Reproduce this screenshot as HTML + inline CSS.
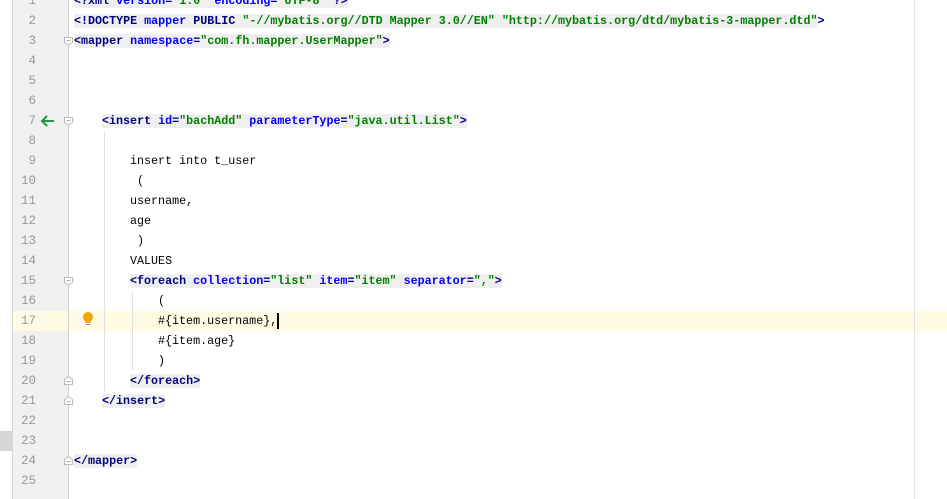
<!DOCTYPE html>
<html><head><meta charset="utf-8"><style>
body{margin:0;width:947px;height:499px;background:#fff;position:relative;overflow:hidden;font-family:"Liberation Mono",monospace;font-size:11.7px;}
.ln{position:absolute;left:10px;width:26px;text-align:right;color:#999;height:20px;line-height:20px;font-size:12.5px;}
.l{position:absolute;height:20px;line-height:20px;white-space:pre;color:#000;}
.t{color:#000080;background:#efefef;font-weight:bold;}
.a{color:#0000ff;}
.v{color:#008000;}
.fold{position:absolute;left:64px;width:9px;height:9px;}
.g{position:absolute;width:1px;background:#e0e0e0;}
</style></head><body>
<div style="position:absolute;left:0;top:431px;width:12px;height:20px;background:#d6d6d6"></div>
<div style="position:absolute;left:12px;top:311px;width:935px;height:20px;background:#fffae3"></div>
<div style="position:absolute;left:12px;top:0;width:56px;height:311px;background:#f0f0f0"></div>
<div style="position:absolute;left:12px;top:331px;width:56px;height:168px;background:#f0f0f0"></div>
<div style="position:absolute;left:12px;top:0;width:1px;height:499px;background:#d8d8d8"></div>
<div style="position:absolute;left:68px;top:0;width:1px;height:499px;background:#d0d0d0"></div>
<div style="position:absolute;left:914px;top:0;width:1px;height:499px;background:#e0e0e0"></div>
<div class="g" style="left:104px;top:131px;height:260px"></div>
<div class="g" style="left:132px;top:291px;height:80px"></div>

<div class="ln" style="top:-9px">1</div><div class="ln" style="top:11px">2</div><div class="ln" style="top:31px">3</div><div class="ln" style="top:51px">4</div><div class="ln" style="top:71px">5</div><div class="ln" style="top:91px">6</div><div class="ln" style="top:111px">7</div><div class="ln" style="top:131px">8</div><div class="ln" style="top:151px">9</div><div class="ln" style="top:171px">10</div><div class="ln" style="top:191px">11</div><div class="ln" style="top:211px">12</div><div class="ln" style="top:231px">13</div><div class="ln" style="top:251px">14</div><div class="ln" style="top:271px">15</div><div class="ln" style="top:291px">16</div><div class="ln" style="top:311px">17</div><div class="ln" style="top:331px">18</div><div class="ln" style="top:351px">19</div><div class="ln" style="top:371px">20</div><div class="ln" style="top:391px">21</div><div class="ln" style="top:411px">22</div><div class="ln" style="top:431px">23</div><div class="ln" style="top:451px">24</div><div class="ln" style="top:471px">25</div>

<svg style="position:absolute;left:39px;top:114px" width="16" height="14"><path d="M15 7H3M8 2L3 7l5 5" stroke="#1f9a3a" stroke-width="2" fill="none"/></svg>
<svg style="position:absolute;left:82px;top:311px" width="12" height="16"><circle cx="6" cy="6" r="5" fill="#f0a30a"/><rect x="3.5" y="9" width="5" height="3" fill="#f0a30a"/><rect x="4" y="13" width="4" height="1" fill="#888"/></svg>
<svg class="fold" style="top:37px"><path d="M.5 .5h8v5l-4 3-4-3z" fill="#fff" stroke="#bbb"/><path d="M2.5 3.5h4" stroke="#aaa"/></svg>
<svg class="fold" style="top:117px"><path d="M.5 .5h8v5l-4 3-4-3z" fill="#fff" stroke="#bbb"/><path d="M2.5 3.5h4" stroke="#aaa"/></svg>
<svg class="fold" style="top:277px"><path d="M.5 .5h8v5l-4 3-4-3z" fill="#fff" stroke="#bbb"/><path d="M2.5 3.5h4" stroke="#aaa"/></svg>
<svg class="fold" style="top:376px"><path d="M.5 8.5h8v-5l-4-3-4 3z" fill="#fff" stroke="#bbb"/><path d="M2.5 5.5h4" stroke="#aaa"/></svg>
<svg class="fold" style="top:396px"><path d="M.5 8.5h8v-5l-4-3-4 3z" fill="#fff" stroke="#bbb"/><path d="M2.5 5.5h4" stroke="#aaa"/></svg>
<svg class="fold" style="top:456px"><path d="M.5 8.5h8v-5l-4-3-4 3z" fill="#fff" stroke="#bbb"/><path d="M2.5 5.5h4" stroke="#aaa"/></svg>

<div class="l" style="left:74px;top:-9px"><span class="t">&lt;?xml <span class="a">version</span>=<span class="v">"1.0"</span> <span class="a">encoding</span>=<span class="v">"UTF-8"</span> ?&gt;</span></div>
<div class="l" style="left:74px;top:11px"><span class="t">&lt;!DOCTYPE <span class="a">mapper</span> PUBLIC <span class="v">"-//mybatis.org//DTD Mapper 3.0//EN"</span> <span class="v">"http://mybatis.org/dtd/mybatis-3-mapper.dtd"</span></span><span style="color:#000080;font-weight:bold">&gt;</span></div>
<div class="l" style="left:74px;top:31px"><span class="t">&lt;mapper <span class="a">namespace</span>=<span class="v">"com.fh.mapper.UserMapper"</span>&gt;</span></div>
<div class="l" style="left:102px;top:111px"><span class="t">&lt;insert <span class="a">id</span>=<span class="v">"bachAdd"</span> <span class="a">parameterType</span>=<span class="v">"java.util.List"</span>&gt;</span></div>
<div class="l" style="left:130px;top:151px">insert into t_user</div>
<div class="l" style="left:130px;top:171px"> (</div>
<div class="l" style="left:130px;top:191px">username,</div>
<div class="l" style="left:130px;top:211px">age</div>
<div class="l" style="left:130px;top:231px"> )</div>
<div class="l" style="left:130px;top:251px">VALUES</div>
<div class="l" style="left:130px;top:271px"><span class="t">&lt;foreach <span class="a">collection</span>=<span class="v">"list"</span> <span class="a">item</span>=<span class="v">"item"</span> <span class="a">separator</span>=<span class="v">","</span>&gt;</span></div>
<div class="l" style="left:158px;top:291px">(</div>
<div class="l" style="left:158px;top:311px">#{item.username},<span style="display:inline-block;width:2px;height:16px;background:#000;vertical-align:middle"></span></div>
<div class="l" style="left:158px;top:331px">#{item.age}</div>
<div class="l" style="left:158px;top:351px">)</div>
<div class="l" style="left:130px;top:371px"><span class="t">&lt;/foreach&gt;</span></div>
<div class="l" style="left:102px;top:391px"><span class="t">&lt;/insert&gt;</span></div>
<div class="l" style="left:74px;top:451px"><span class="t">&lt;/mapper&gt;</span></div>
</body></html>
